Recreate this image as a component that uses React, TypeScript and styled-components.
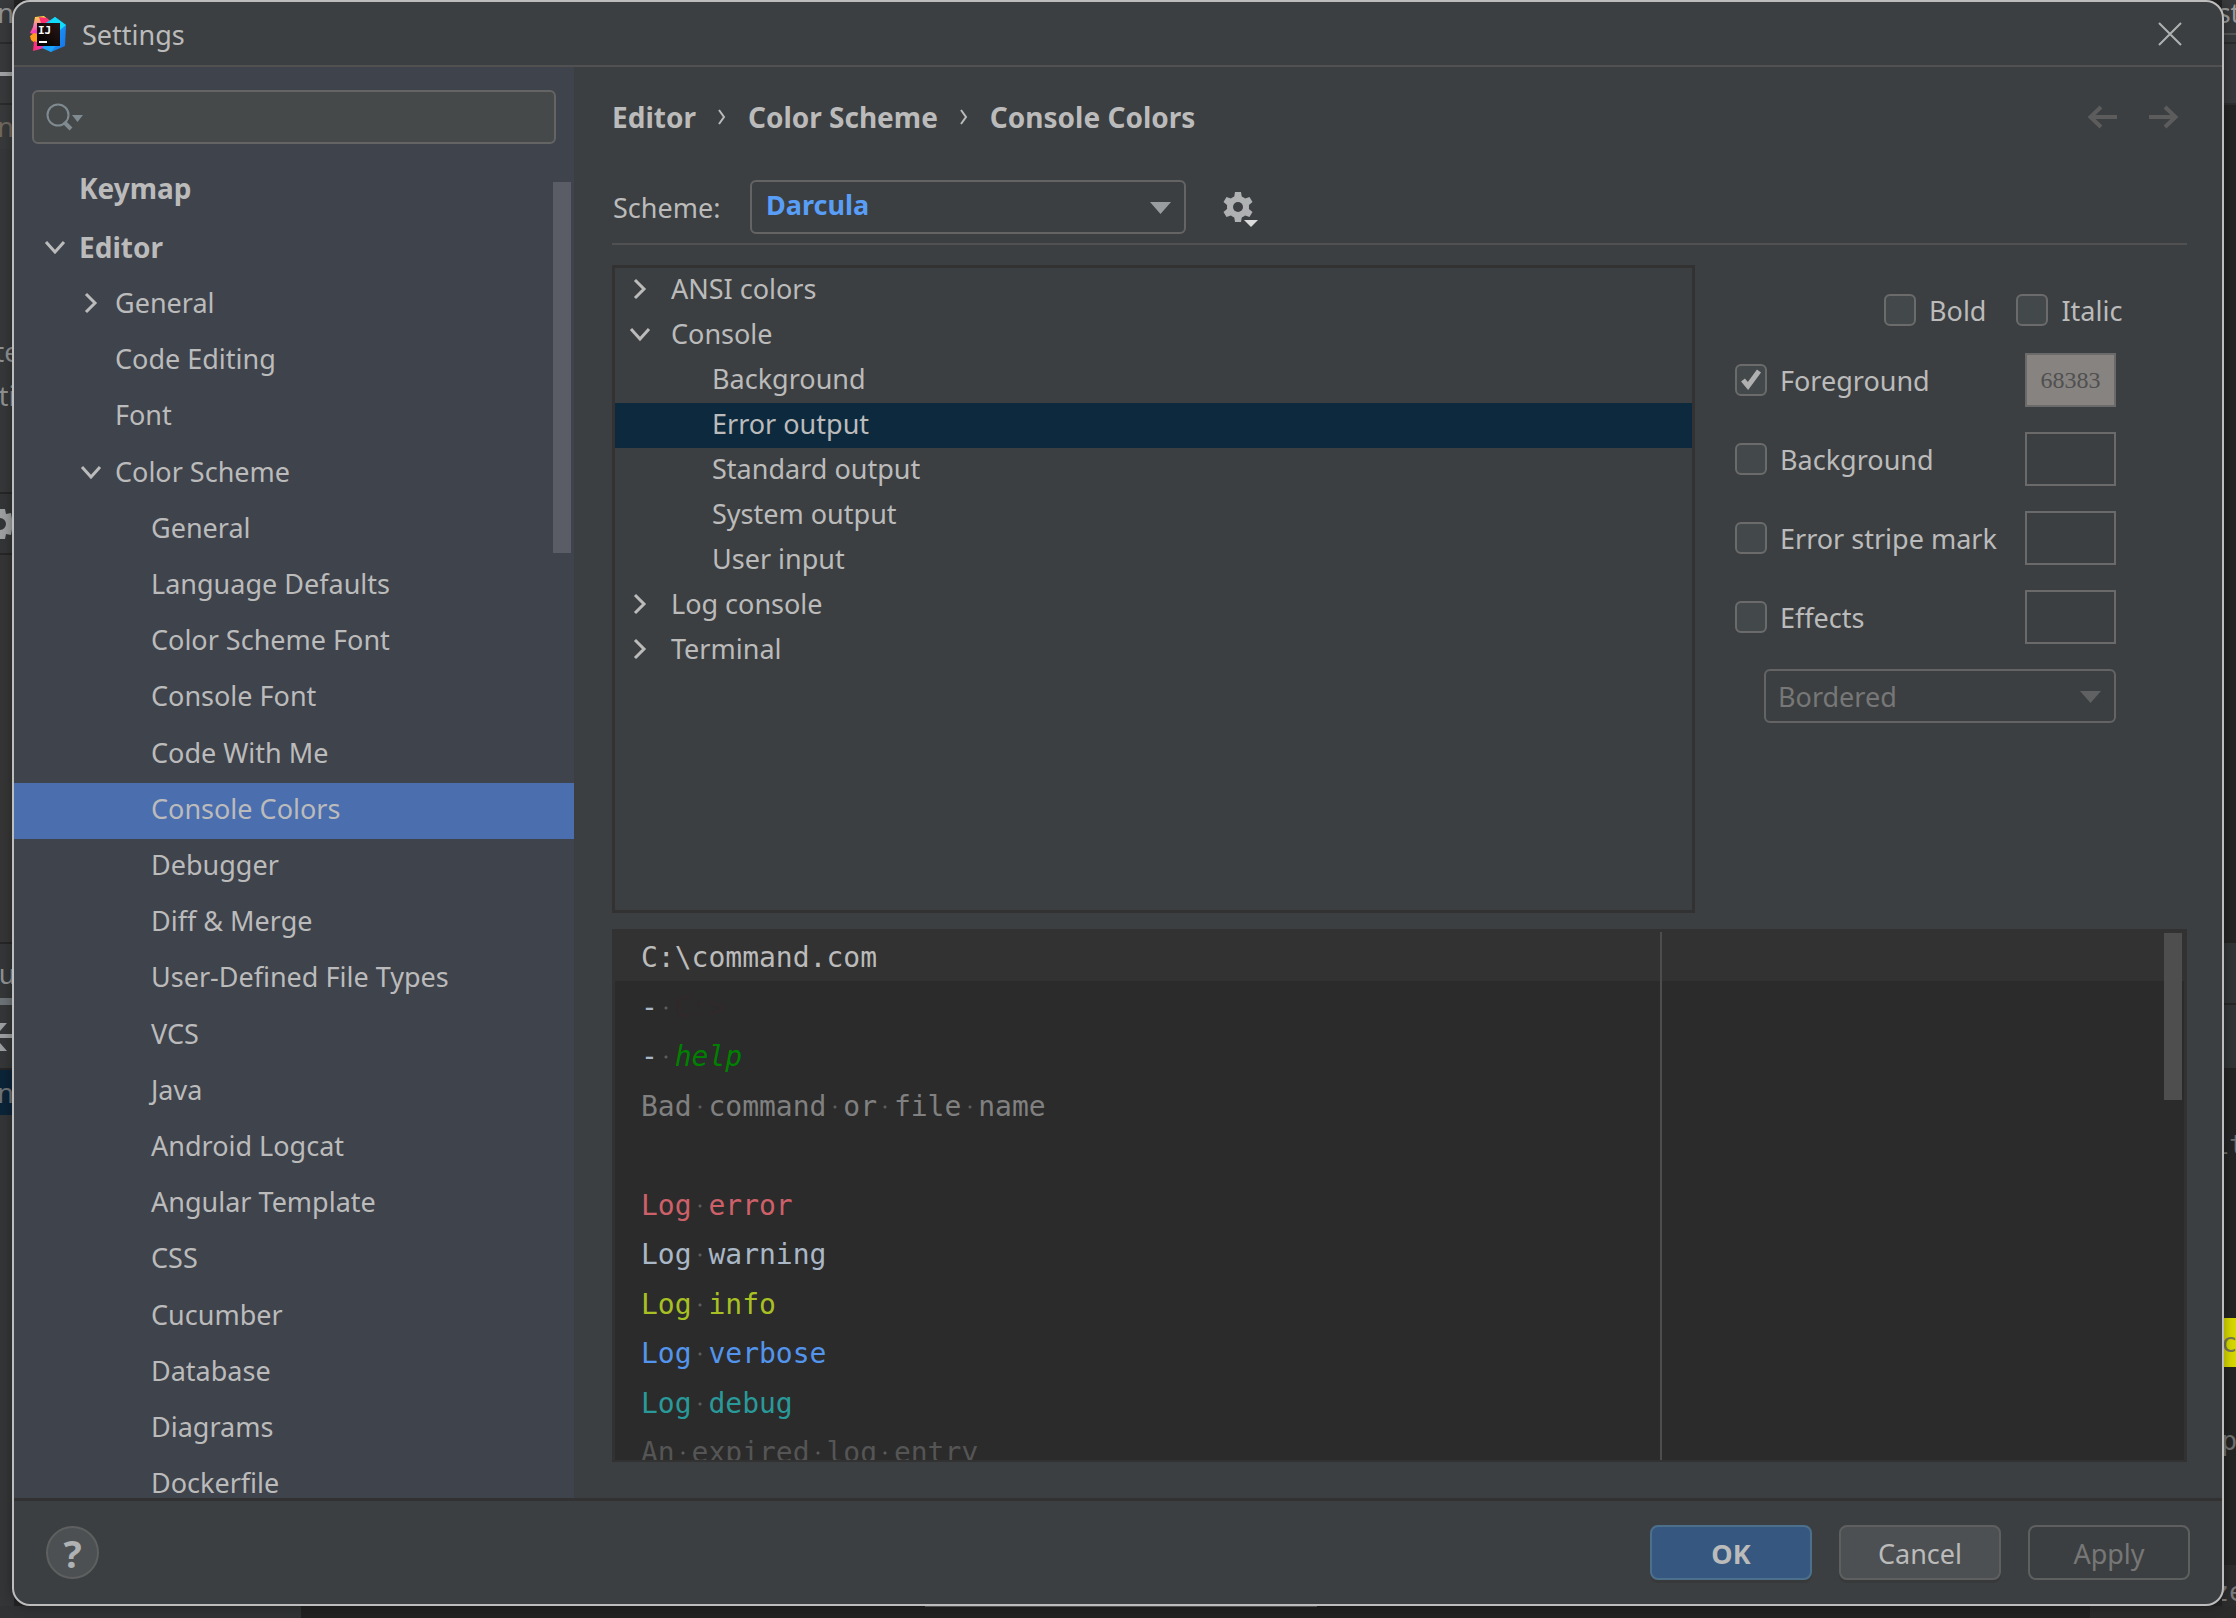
import React from "react";
import styled, { createGlobalStyle, css } from "styled-components";

const c = {
  panel: "#3c3f41",
  side: "#3f434c",
  text: "#bbbbbb",
  dim: "#777777",
  line: "#515151",
  edge: "#323232",
  field: "#45494a",
  border: "#646464",
  icon: "#afb1b3",
};

const sans = `"Noto Sans", "Open Sans", sans-serif`;
const mono = `"DejaVu Sans Mono", "Liberation Mono", monospace`;

const Global = createGlobalStyle`
  *, *::before, *::after { box-sizing: border-box; }
  html, body, #root { height: 100%; }
  body { margin: 0; background: #242424; color: ${c.text}; font-family: ${sans}; font-size: 27px; line-height: 36px; overflow: hidden; }
  button, input, select { font: inherit; color: inherit; margin: 0; }
  ul { list-style: none; margin: 0; padding: 0; }
`;

/* ---------- application window behind the dialog ---------- */

const Page = styled.div`
  position: relative;
  height: 100vh;
  min-height: 900px;
  padding: 0 12px 12px;
`;

const Backdrop = styled.div`
  position: absolute;
  inset: 0;
  display: grid;
  grid-template-columns: 14px 1fr 14px;
  grid-template-rows: 1fr 12px;
`;

const Strip = styled.div`
  display: flex;
  flex-direction: column;
  overflow: hidden;
`;

const Segment = styled.div<{ $h: number; $bg: string; $fg?: string; $mono?: boolean; $align?: string }>`
  flex: none;
  height: ${(p) => p.$h}px;
  background: ${(p) => p.$bg};
  color: ${(p) => p.$fg || "#8f9092"};
  font-family: ${(p) => (p.$mono ? mono : sans)};
  display: flex;
  align-items: center;
  justify-content: ${(p) => p.$align || "flex-start"};
  overflow: hidden;
  white-space: pre;
`;

const BottomStrip = styled.div`
  grid-column: 1 / -1;
  display: grid;
  grid-template-columns: 301px 624px 392px 1fr 146px;
`;

const BottomCell = styled.div<{ $bg: string; $top?: string }>`
  background: ${(p) => p.$bg};
  border-top: 1px solid ${(p) => p.$top || p.$bg};
`;

/* ---------- dialog frame ---------- */

const Dialog = styled.section`
  position: relative;
  height: 100%;
  display: flex;
  flex-direction: column;
  background: ${c.panel};
  border: 2px solid #bdbdbd;
  border-radius: 18px;
  overflow: hidden;
  box-shadow: 0 0 12px rgba(0, 0, 0, 0.35);
`;

const TitleBar = styled.header`
  display: flex;
  align-items: center;
  flex: none;
  height: 65px;
  padding: 0 28px 0 16px;
  gap: 16px;
  border-bottom: 2px solid ${c.line};
`;

const Title = styled.h1`
  flex: 1;
  margin: 0;
  padding-top: 2px;
  font-size: 27px;
  font-weight: 400;
`;

const IconButton = styled.button`
  display: flex;
  align-items: center;
  justify-content: center;
  padding: 0;
  border: 0;
  background: none;
  color: ${c.icon};

  &:disabled {
    color: #5c5c5c;
  }
`;

const Body = styled.div`
  flex: 1;
  min-height: 0;
  display: flex;
`;

/* ---------- sidebar ---------- */

const Sidebar = styled.nav`
  flex: none;
  width: 560px;
  display: flex;
  flex-direction: column;
  gap: 18px;
  padding-top: 23px;
  background: ${c.side};
`;

const Search = styled.label`
  display: flex;
  align-items: center;
  gap: 4px;
  flex: none;
  height: 54px;
  margin: 0 18px;
  padding: 0 12px;
  background: ${c.field};
  border: 2px solid ${c.border};
  border-radius: 6px;

  input {
    flex: 1;
    min-width: 0;
    border: 0;
    outline: 0;
    background: none;
  }
`;

const NavScroll = styled.div`
  position: relative;
  flex: 1;
  min-height: 0;
  overflow: hidden;
`;

const NavList = styled.ul`
  display: flex;
  flex-direction: column;
  height: calc(100% + 16px);
`;

const NavItem = styled.li<{ $spaced?: boolean }>`
  flex: 1;
  min-height: 40px;
  display: flex;
  margin-bottom: ${(p) => (p.$spaced ? 3 : 0)}px;
`;

const treeRow = css`
  flex: 1;
  display: flex;
  align-items: center;
  border: 0;
  color: ${c.text};
  text-align: left;
  white-space: nowrap;
`;

const NavButton = styled.button<{ $level: number; $active?: boolean; $bold?: boolean }>`
  ${treeRow}
  gap: 12px;
  padding: 0 0 5px ${(p) => 29 + p.$level * 36}px;
  background: ${(p) => (p.$active ? "#4b6eaf" : "transparent")};
  font-size: ${(p) => (p.$bold ? 28 : 27)}px;
  font-weight: ${(p) => (p.$bold ? 700 : 400)};
`;

const Twisty = styled.svg`
  flex: none;
  width: 24px;
  height: 24px;
  fill: none;
  stroke: ${c.text};
  stroke-width: 3;
`;

const NavThumb = styled.div`
  position: absolute;
  top: 20px;
  right: 3px;
  width: 18px;
  height: 371px;
  background: #5a5d66;
`;

/* ---------- content ---------- */

const Main = styled.main`
  flex: 1;
  min-width: 0;
  display: flex;
  flex-direction: column;
  padding: 23px 35px 36px 38px;
`;

const Crumbs = styled.div`
  flex: none;
  display: flex;
  align-items: center;
  justify-content: space-between;
  height: 54px;
  margin-bottom: 36px;
`;

const CrumbPath = styled.div`
  display: flex;
  align-items: center;
  gap: 22px;
  font-size: 28px;
  font-weight: 700;
`;

const CrumbArrows = styled.div`
  display: flex;
  gap: 30px;
  padding-right: 8px;
`;

const SchemeRow = styled.div`
  flex: none;
  display: flex;
  align-items: center;
  height: 65px;
  padding-bottom: 9px;
  border-bottom: 2px solid ${c.line};
  margin-bottom: 20px;
`;

const SchemeLabel = styled.label`
  width: 138px;
  padding: 2px 0 0 1px;
`;

const SelectBox = styled.div<{ $w: number }>`
  position: relative;
  width: ${(p) => p.$w}px;
  height: 54px;

  svg {
    position: absolute;
    top: 22px;
    right: 15px;
    pointer-events: none;
  }
`;

const Select = styled.select<{ $accent?: boolean }>`
  appearance: none;
  width: 100%;
  height: 100%;
  padding: ${(p) => (p.$accent ? "0 40px 4px 14px" : "1px 40px 0 12px")};
  background: ${c.panel};
  border: 2px solid ${c.border};
  border-radius: 6px;
  color: ${(p) => (p.$accent ? "#589df6" : c.text)};
  font-weight: ${(p) => (p.$accent ? 700 : 400)};

  &:disabled {
    color: ${c.dim};
    opacity: 1;
  }
`;

const GearButton = styled(IconButton)`
  margin-left: 37px;
  padding-top: 3px;
`;

const Panes = styled.div`
  flex: 1;
  min-height: 0;
  display: grid;
  grid-template-rows: minmax(0, 17fr) minmax(0, 14fr);
  gap: 16px;
`;

const Attributes = styled.div`
  display: flex;
  min-height: 0;
`;

const AttrTree = styled.ul`
  flex: 1;
  min-width: 0;
  border: 3px solid ${c.edge};
`;

const AttrItem = styled.li`
  display: flex;
  height: 45px;
`;

const AttrButton = styled.button<{ $child?: boolean; $active?: boolean }>`
  ${treeRow}
  gap: 19px;
  padding: 0 0 3px ${(p) => (p.$child ? 97 : 13)}px;
  background: ${(p) => (p.$active ? "#0d293e" : "transparent")};
`;

const Options = styled.form`
  flex: none;
  width: 492px;
  padding: 29px 71px 0 40px;
  display: flex;
  flex-direction: column;
  gap: 25px;
`;

const StyleRow = styled.div`
  display: flex;
  gap: 30px;
  padding: 0 0 2px 149px;
`;

const OptionRow = styled.div`
  display: flex;
  align-items: center;
  justify-content: space-between;
  height: 54px;
`;

const CheckLabel = styled.label`
  display: flex;
  align-items: center;
  gap: 13px;
  height: 32px;
  white-space: nowrap;
`;

const CheckText = styled.span`
  padding-top: 2px;
`;

const CheckBox = styled.span`
  position: relative;
  display: block;
  width: 32px;
  height: 32px;

  input {
    appearance: none;
    display: block;
    width: 32px;
    height: 32px;
    background: #43494a;
    border: 2px solid #6b6b6b;
    border-radius: 6px;
  }

  svg {
    position: absolute;
    inset: 0;
    pointer-events: none;
  }
`;

const Swatch = styled.button<{ $fill?: string }>`
  width: 91px;
  height: 54px;
  padding: 0;
  border: 2px solid #6a6a6a;
  background: ${(p) => p.$fill || "transparent"};
  color: #505050;
  font-family: "Liberation Serif", serif;
  font-size: 24px;
`;

const EffectRow = styled.div`
  display: flex;
  justify-content: flex-end;
`;

/* ---------- preview ---------- */

const Preview = styled.div`
  position: relative;
  overflow: hidden;
  background: #2b2b2b;
  border: 3px solid ${c.edge};
  border-bottom-width: 2px;
`;

const CodeLines = styled.div`
  display: flex;
  flex-direction: column;
  height: calc(100% + 16px);
  font-family: ${mono};
  font-size: 28px;
`;

const CodeLine = styled.div<{ $color: string; $current?: boolean }>`
  flex: 1;
  display: flex;
  align-items: center;
  padding: 4px 0 0 26px;
  color: ${(p) => p.$color};
  background: ${(p) => (p.$current ? c.edge : "transparent")};
  white-space: pre;
`;

const Space = styled.span`
  background: radial-gradient(circle, #5c5c5c 1px, transparent 2px) center / 4px 4px no-repeat;
`;

const Typed = styled.span`
  color: #008000;
  font-style: italic;
`;

const Prompt = styled.span`
  color: #302829;
`;

const Margin = styled.div`
  position: absolute;
  top: 0;
  bottom: 0;
  left: 1045px;
  width: 2px;
  background: #4d4d4d;
`;

const PreviewThumb = styled.div`
  position: absolute;
  top: 1px;
  right: 2px;
  width: 18px;
  height: 167px;
  background: #4e4e4e;
`;

/* ---------- footer ---------- */

const Footer = styled.footer`
  flex: none;
  display: flex;
  align-items: center;
  gap: 27px;
  height: 106px;
  padding: 0 32px;
  border-top: 3px solid ${c.edge};
`;

const HelpButton = styled.button`
  width: 53px;
  height: 53px;
  padding: 0;
  margin-right: auto;
  border: 2px solid #5e6060;
  border-radius: 50%;
  background: #4c5052;
  color: ${c.icon};
  font-size: 38px;
  font-weight: 700;
`;

const Button = styled.button<{ $primary?: boolean }>`
  width: 162px;
  height: 55px;
  padding: 2px 0 0;
  border: 2px solid ${(p) => (p.$primary ? "#4c708c" : "#5e6060")};
  border-radius: 8px;
  background: ${(p) => (p.$primary ? "#365880" : "#4c5052")};
  box-shadow: 0 3px 0 #38393a;
  font-weight: ${(p) => (p.$primary ? 700 : 400)};

  &:disabled {
    background: transparent;
    box-shadow: none;
    color: ${c.dim};
  }
`;

/* ---------- drawings ---------- */

const Logo = () => (
  <svg width="36" height="36" viewBox="0 0 36 36" aria-hidden="true">
    <defs>
      <linearGradient id="lgA" x1="0" y1="0" x2="0" y2="1">
        <stop offset="0" stopColor="#fdd835" />
        <stop offset="0.45" stopColor="#f77fb0" />
        <stop offset="1" stopColor="#ff2d8a" />
      </linearGradient>
      <linearGradient id="lgB" x1="0" y1="0" x2="1" y2="1">
        <stop offset="0" stopColor="#18d7f5" />
        <stop offset="0.5" stopColor="#1a93f5" />
        <stop offset="1" stopColor="#1670e8" />
      </linearGradient>
      <linearGradient id="lgC" x1="0" y1="0" x2="1" y2="0">
        <stop offset="0" stopColor="#ff2d6a" />
        <stop offset="1" stopColor="#d13df0" />
      </linearGradient>
      <linearGradient id="lgD" x1="0" y1="1" x2="1" y2="0">
        <stop offset="0" stopColor="#000000" />
        <stop offset="1" stopColor="#2a1717" />
      </linearGradient>
    </defs>
    <path d="M5 1 14 0 20 5 20 12 8 20 0 17 3 11Z" fill="url(#lgA)" />
    <path d="M9 1 17 2 20 6 12 10Z" fill="#ff2f72" />
    <path d="M0 20 8 14 12 26 6 28 1 24Z" fill="#ff9a1f" />
    <path d="M0 16 8 13 8 18Z" fill="#f23cc0" />
    <path d="M14 8 25 1 36 9 35 30 21 36 14 30Z" fill="url(#lgB)" />
    <path d="M25 1 36 9 30 14 18 7Z" fill="#0fdcf8" />
    <path d="M4 25 9 27 20 29 14 32 3 35Z" fill="url(#lgC)" />
    <path d="M15 29 26 29 21 36 12 32Z" fill="#1ba4fb" />
    <rect x="7" y="7" width="23" height="23" fill="url(#lgD)" />
    <text x="8" y="18" fill="#fff" fontFamily="DejaVu Sans Mono" fontWeight="700" fontSize="11">IJ</text>
    <rect x="9" y="25" width="8" height="2" fill="#fff" />
  </svg>
);

const Chevron = ({ open }: { open: boolean }) => (
  <Twisty viewBox="0 0 24 24" aria-hidden="true">
    <path d={open ? "M3 7 12 17 21 7" : "M7 3 16 12 7 21"} />
  </Twisty>
);

const Triangle = ({ color }: { color: string }) => (
  <svg width="21" height="12" viewBox="0 0 21 12" aria-hidden="true">
    <path d="M0 0H21L10.5 12Z" fill={color} />
  </svg>
);

const CrumbMark = () => (
  <svg width="8" height="18" viewBox="0 0 8 18" fill="none" stroke={c.text} strokeWidth="2" aria-hidden="true">
    <path d="M1 2 6 9 1 16" />
  </svg>
);

const Arrow = ({ right }: { right?: boolean }) => (
  <svg width="31" height="24" viewBox="0 0 31 24" fill="none" stroke="currentColor" strokeWidth="4" aria-hidden="true">
    <path d={right ? "M1 12H28M17 2 27.500 12 17 22" : "M30 12H3M14 2 3.500 12 14 22"} />
  </svg>
);

const teeth = [0, 60, 120, 180, 240, 300];

const Gear = () => (
  <svg width="36" height="36" viewBox="0 0 36 36" aria-hidden="true">
    <mask id="gearHole">
      <rect width="36" height="36" fill="#fff" />
      <circle cx="15" cy="16" r="5" fill="#000" />
    </mask>
    <g fill="currentColor" mask="url(#gearHole)">
      <circle cx="15" cy="16" r="11" />
      {teeth.map((a) => (
        <path key={a} d="M12 1H18L19 7H11Z" transform={`rotate(${a} 15 16)`} />
      ))}
    </g>
    <path d="M21 29H35L28 36Z" fill="#dcdcdc" />
  </svg>
);

/* ---------- data ---------- */

type Node = { label: string; level: number; open?: boolean; bold?: boolean; active?: boolean; spaced?: boolean };

const nav: Node[] = [
  { label: "Keymap", level: 0, bold: true, spaced: true },
  { label: "Editor", level: 0, bold: true, open: true },
  { label: "General", level: 1, open: false },
  { label: "Code Editing", level: 1 },
  { label: "Font", level: 1 },
  { label: "Color Scheme", level: 1, open: true },
  ...[
    "General",
    "Language Defaults",
    "Color Scheme Font",
    "Console Font",
    "Code With Me",
    "Console Colors",
    "Debugger",
    "Diff & Merge",
    "User-Defined File Types",
    "VCS",
    "Java",
    "Android Logcat",
    "Angular Template",
    "CSS",
    "Cucumber",
    "Database",
    "Diagrams",
    "Dockerfile",
  ].map((label) => ({ label, level: 2, active: label === "Console Colors" })),
];

const attrs: { label: string; open?: boolean; active?: boolean }[] = [
  { label: "ANSI colors", open: false },
  { label: "Console", open: true },
  { label: "Background" },
  { label: "Error output", active: true },
  { label: "Standard output" },
  { label: "System output" },
  { label: "User input" },
  { label: "Log console", open: false },
  { label: "Terminal", open: false },
];

const options = [
  { label: "Foreground", on: true, value: "68383", fill: "#868380" },
  { label: "Background" },
  { label: "Error stripe mark" },
  { label: "Effects" },
];

const lines: { text: string; color: string }[] = [
  { text: "Bad command or file name", color: "#808080" },
  { text: "", color: c.text },
  { text: "Log error", color: "#cd6069" },
  { text: "Log warning", color: "#a9b7c6" },
  { text: "Log info", color: "#a8c023" },
  { text: "Log verbose", color: "#5394ec" },
  { text: "Log debug", color: "#299999" },
  { text: "An expired log entry", color: "#555555" },
];

const Dotted = ({ text }: { text: string }) => (
  <>
    {text.split(" ").map((word, i) => (
      <React.Fragment key={i}>
        {i > 0 && <Space> </Space>}
        <span>{word}</span>
      </React.Fragment>
    ))}
  </>
);

const Check = ({ label, on }: { label: string; on?: boolean }) => {
  const [checked, setChecked] = React.useState(!!on);
  return (
    <CheckLabel>
      <CheckBox>
        <input type="checkbox" checked={checked} onChange={(e) => setChecked(e.target.checked)} />
        {checked && (
          <svg viewBox="0 0 32 32" fill="none" stroke="#b0b0b0" strokeWidth="5" aria-hidden="true">
            <path d="M8 16 13 22 24 7" />
          </svg>
        )}
      </CheckBox>
      <CheckText>{label}</CheckText>
    </CheckLabel>
  );
};

const Behind = () => (
  <Backdrop aria-hidden="true">
    <Strip>
      <Segment $h={26} $bg="#37393a" $align="flex-end">n</Segment>
      <Segment $h={16} $bg="#37393a" />
      <Segment $h={2} $bg="#2a2b2b" />
      <Segment $h={28} $bg="#37393a" />
      <Segment $h={4} $bg="#a0a2a4" />
      <Segment $h={27} $bg="#37393a" />
      <Segment $h={2} $bg="#2a2b2b" />
      <Segment $h={44} $bg="#37393a" $fg="#6f685f" $align="flex-end">n</Segment>
      <Segment $h={181} $bg="#353738" />
      <Segment $h={44} $bg="#353738" $align="center">te</Segment>
      <Segment $h={44} $bg="#353738" $align="center">ti</Segment>
      <Segment $h={74} $bg="#353738" />
      <Segment $h={2} $bg="#262626" />
      <Segment $h={59} $bg="#333536">
        <svg width="12" height="30" viewBox="0 0 12 30">
          <path d="M0 0H5L6 5 11 4 12 10V20L11 26 6 25 5 30H0V21A6 6 0 0 0 0 9Z" fill="#9c9ea0" />
        </svg>
      </Segment>
      <Segment $h={2} $bg="#262626" />
      <Segment $h={387} $bg="#353535" />
      <Segment $h={2} $bg="#262626" />
      <Segment $h={6} $bg="#343637" />
      <Segment $h={48} $bg="#343637" $align="center">u</Segment>
      <Segment $h={7} $bg="#6c7276" />
      <Segment $h={63} $bg="#343637">
        <svg width="12" height="28" viewBox="0 0 12 28" fill="#9c9ea0">
          <path d="M0 0H7L0 8ZM0 11H12V15H0ZM0 20 7 28H0Z" />
        </svg>
      </Segment>
      <Segment $h={2} $bg="#262626" />
      <Segment $h={45} $bg="#0c2438" $fg="#6c7276" $align="flex-end">n</Segment>
      <Segment $h={600} $bg="#333536" />
    </Strip>
    <div />
    <Strip>
      <Segment $h={26} $bg="#37393a" $fg="#9a9a9a" $align="center">st</Segment>
      <Segment $h={7} $bg="#37393a" />
      <Segment $h={2} $bg="#555555" />
      <Segment $h={7} $bg="#37393a" />
      <Segment $h={2} $bg="#2a2b2b" />
      <Segment $h={59} $bg="#37393a" />
      <Segment $h={2} $bg="#2c2e2f" />
      <Segment $h={838} $bg="#242424" />
      <Segment $h={60} $bg="#313536" />
      <Segment $h={2} $bg="#262626" />
      <Segment $h={63} $bg="#313536" />
      <Segment $h={52} $bg="#242424" />
      <Segment $h={50} $bg="#242424" $fg="#6f7070" $mono $align="center">it</Segment>
      <Segment $h={148} $bg="#242424" />
      <Segment $h={49} $bg="#d8d800" $fg="#77775a" $mono $align="center">c</Segment>
      <Segment $h={49} $bg="#242424" />
      <Segment $h={49} $bg="#242424" $fg="#6f7070" $mono $align="center">p</Segment>
      <Segment $h={100} $bg="#242424" />
      <Segment $h={53} $bg="#2d2d2d" $fg="#7a7a7a" $mono $align="center">ze</Segment>
    </Strip>
    <BottomStrip>
      <BottomCell $bg="#303234" />
      <BottomCell $bg="#212121" />
      <BottomCell $bg="#212121" $top="#5e5e5e" />
      <BottomCell $bg="#212121" />
      <BottomCell $bg="#2b2b2b" />
    </BottomStrip>
  </Backdrop>
);

export default function App() {
  return (
    <Page>
      <Global />
      <Behind />
      <Dialog role="dialog" aria-labelledby="dialog-title">
        <TitleBar>
          <Logo />
          <Title id="dialog-title">Settings</Title>
          <IconButton type="button" aria-label="Close">
            <svg width="48" height="24" viewBox="0 0 48 24" fill="none" stroke="currentColor" strokeWidth="2" aria-hidden="true">
              <path d="M13 1 35 23M35 1 13 23" />
            </svg>
          </IconButton>
        </TitleBar>

        <Body>
          <Sidebar aria-label="Settings sections">
            <Search>
              <svg width="38" height="28" viewBox="0 0 38 28" fill="none" stroke="#7f8b91" aria-hidden="true">
                <circle cx="12" cy="12" r="10.500" strokeWidth="2" />
                <path d="M18 19 25 26" strokeWidth="4" />
                <path d="M26 12H37L31.500 19Z" fill="#7f8b91" stroke="none" />
              </svg>
              <input type="text" aria-label="Search settings" />
            </Search>
            <NavScroll>
              <NavList>
                {nav.map((n, i) => (
                  <NavItem key={i} $spaced={n.spaced}>
                    <NavButton type="button" $level={n.level} $active={n.active} $bold={n.bold}>
                      {n.open === undefined ? <Twisty aria-hidden="true" /> : <Chevron open={n.open} />}
                      {n.label}
                    </NavButton>
                  </NavItem>
                ))}
              </NavList>
              <NavThumb />
            </NavScroll>
          </Sidebar>

          <Main>
            <Crumbs>
              <CrumbPath>
                <span>Editor</span>
                <CrumbMark />
                <span>Color Scheme</span>
                <CrumbMark />
                <span>Console Colors</span>
              </CrumbPath>
              <CrumbArrows>
                <IconButton type="button" aria-label="Back" disabled>
                  <Arrow />
                </IconButton>
                <IconButton type="button" aria-label="Forward" disabled>
                  <Arrow right />
                </IconButton>
              </CrumbArrows>
            </Crumbs>

            <SchemeRow>
              <SchemeLabel htmlFor="scheme">Scheme:</SchemeLabel>
              <SelectBox $w={436}>
                <Select id="scheme" $accent defaultValue="Darcula">
                  <option>Darcula</option>
                </Select>
                <Triangle color="#9a9da0" />
              </SelectBox>
              <GearButton type="button" aria-label="Scheme actions">
                <Gear />
              </GearButton>
            </SchemeRow>

            <Panes>
              <Attributes>
                <AttrTree>
                  {attrs.map((a) => (
                    <AttrItem key={a.label}>
                      <AttrButton type="button" $child={a.open === undefined} $active={a.active}>
                        {a.open !== undefined && <Chevron open={a.open} />}
                        {a.label}
                      </AttrButton>
                    </AttrItem>
                  ))}
                </AttrTree>
                <Options>
                  <StyleRow>
                    <Check label="Bold" />
                    <Check label="Italic" />
                  </StyleRow>
                  {options.map((o) => (
                    <OptionRow key={o.label}>
                      <Check label={o.label} on={o.on} />
                      <Swatch type="button" $fill={o.fill} aria-label={`${o.label} color`}>
                        {o.value}
                      </Swatch>
                    </OptionRow>
                  ))}
                  <EffectRow>
                    <SelectBox $w={352}>
                      <Select disabled aria-label="Effect type" defaultValue="Bordered">
                        <option>Bordered</option>
                      </Select>
                      <Triangle color="#606162" />
                    </SelectBox>
                  </EffectRow>
                </Options>
              </Attributes>

              <Preview>
                <CodeLines>
                  <CodeLine $color={c.text} $current>C:\command.com</CodeLine>
                  <CodeLine $color="#a9b7c6">
                    -<Space> </Space>
                    <Prompt>C:&gt;</Prompt>
                  </CodeLine>
                  <CodeLine $color="#a9b7c6">
                    -<Space> </Space>
                    <Typed>help</Typed>
                  </CodeLine>
                  {lines.map((l, i) => (
                    <CodeLine key={i} $color={l.color}>
                      <Dotted text={l.text} />
                    </CodeLine>
                  ))}
                </CodeLines>
                <Margin />
                <PreviewThumb />
              </Preview>
            </Panes>
          </Main>
        </Body>

        <Footer>
          <HelpButton type="button" aria-label="Help">?</HelpButton>
          <Button type="button" $primary>OK</Button>
          <Button type="button">Cancel</Button>
          <Button type="button" disabled>Apply</Button>
        </Footer>
      </Dialog>
    </Page>
  );
}
